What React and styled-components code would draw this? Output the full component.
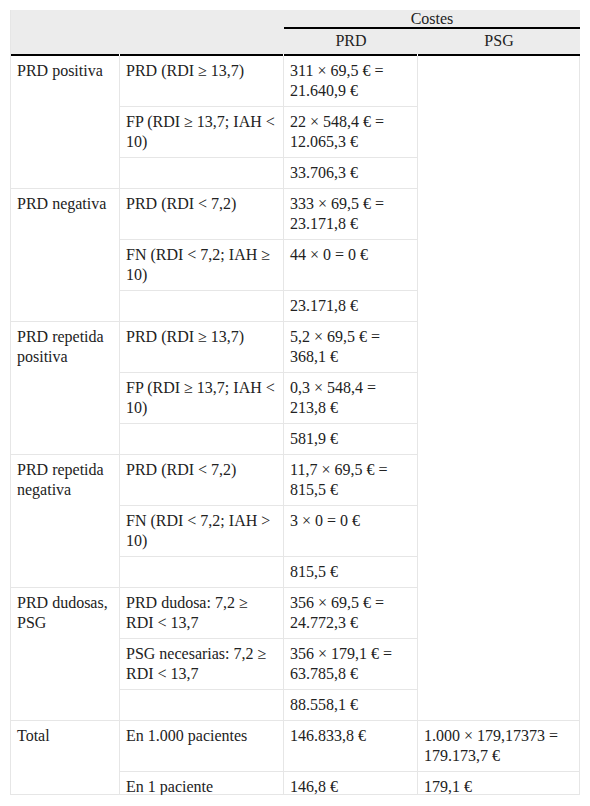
import React from 'react';
import styled, { createGlobalStyle } from 'styled-components';

const GlobalStyle = createGlobalStyle`
  body {
    margin: 0;
    background: #fff;
    font-family: "Liberation Serif", "Times New Roman", Times, serif;
    color: #222;
  }
`;

const Page = styled.div`
  padding: 10px 10px 0 10px;
  width: 570px;
`;

const Table = styled.table`
  width: 570px;
  table-layout: fixed;
  border-collapse: separate;
  border-spacing: 0;
  font-family: "Liberation Serif", "Times New Roman", Times, serif;
  font-size: 16px;
  line-height: 20px;
  color: #222;
  border-left: 1px solid #e6e6e6;
`;

const Head = styled.th`
  font-weight: normal;
  text-align: center;
  vertical-align: bottom;
  padding: ${p => (p.$top ? '0 6px 2px' : '2px 6px 5px')};
  line-height: ${p => (p.$top ? '17px' : '20px')};
  background:
    ${p => (p.$gap ? 'linear-gradient(#fff, #fff) right bottom / 1px 2px no-repeat,' : '')}
    linear-gradient(#000, #000) left bottom / 100% 2px no-repeat,
    #ececec;
`;

const Cell = styled.td`
  vertical-align: top;
  text-align: left;
  padding: ${p => (p.$last ? '7px 6px 0' : '5px 6px')};
  line-height: ${p => (p.$last ? '15px' : '20px')};
  border-right: 1px solid #e6e6e6;
  border-bottom: 1px solid #e6e6e6;
`;

const groups = [
  {
    label: 'PRD positiva',
    rows: [
      ['PRD (RDI ≥ 13,7)', '311 × 69,5 € = 21.640,9 €'],
      ['FP (RDI ≥ 13,7; IAH < 10)', '22 × 548,4 € = 12.065,3 €'],
      ['', '33.706,3 €'],
    ],
  },
  {
    label: 'PRD negativa',
    rows: [
      ['PRD (RDI < 7,2)', '333 × 69,5 € = 23.171,8 €'],
      ['FN (RDI < 7,2; IAH ≥ 10)', '44 × 0 = 0 €'],
      ['', '23.171,8 €'],
    ],
  },
  {
    label: 'PRD repetida positiva',
    rows: [
      ['PRD (RDI ≥ 13,7)', '5,2 × 69,5 € = 368,1 €'],
      ['FP (RDI ≥ 13,7; IAH < 10)', '0,3 × 548,4 = 213,8 €'],
      ['', '581,9 €'],
    ],
  },
  {
    label: 'PRD repetida negativa',
    rows: [
      ['PRD (RDI < 7,2)', '11,7 × 69,5 € = 815,5 €'],
      ['FN (RDI < 7,2; IAH > 10)', '3 × 0 = 0 €'],
      ['', '815,5 €'],
    ],
  },
  {
    label: 'PRD dudosas, PSG',
    rows: [
      ['PRD dudosa: 7,2 ≥ RDI < 13,7', '356 × 69,5 € = 24.772,3 €'],
      ['PSG necesarias: 7,2 ≥ RDI < 13,7', '356 × 179,1 € = 63.785,8 €'],
      ['', '88.558,1 €'],
    ],
  },
];

const totalRows = groups.reduce((n, g) => n + g.rows.length, 0);

const App = () => {
  return (
    <Page>
      <GlobalStyle />
      <Table>
        <colgroup>
          <col style={{ width: 109 }} />
          <col style={{ width: 164 }} />
          <col style={{ width: 134 }} />
          <col style={{ width: 162 }} />
        </colgroup>
        <thead>
          <tr>
            <Head rowSpan={2} $gap />
            <Head rowSpan={2} $gap />
            <Head colSpan={2} $top>Costes</Head>
          </tr>
          <tr>
            <Head $gap>PRD</Head>
            <Head>PSG</Head>
          </tr>
        </thead>
        <tbody>
          {groups.map((g, gi) =>
            g.rows.map((r, ri) => (
              <tr key={`${gi}-${ri}`}>
                {ri === 0 && <Cell rowSpan={g.rows.length}>{g.label}</Cell>}
                <Cell>{r[0]}</Cell>
                <Cell>{r[1]}</Cell>
                {gi === 0 && ri === 0 && <Cell rowSpan={totalRows} />}
              </tr>
            ))
          )}
          <tr>
            <Cell rowSpan={2}>Total</Cell>
            <Cell>En 1.000 pacientes</Cell>
            <Cell>146.833,8 €</Cell>
            <Cell>1.000 × 179,17373 = 179.173,7 €</Cell>
          </tr>
          <tr>
            <Cell $last>En 1 paciente</Cell>
            <Cell $last>146,8 €</Cell>
            <Cell $last>179,1 €</Cell>
          </tr>
        </tbody>
      </Table>
    </Page>
  );
};

export default App;
